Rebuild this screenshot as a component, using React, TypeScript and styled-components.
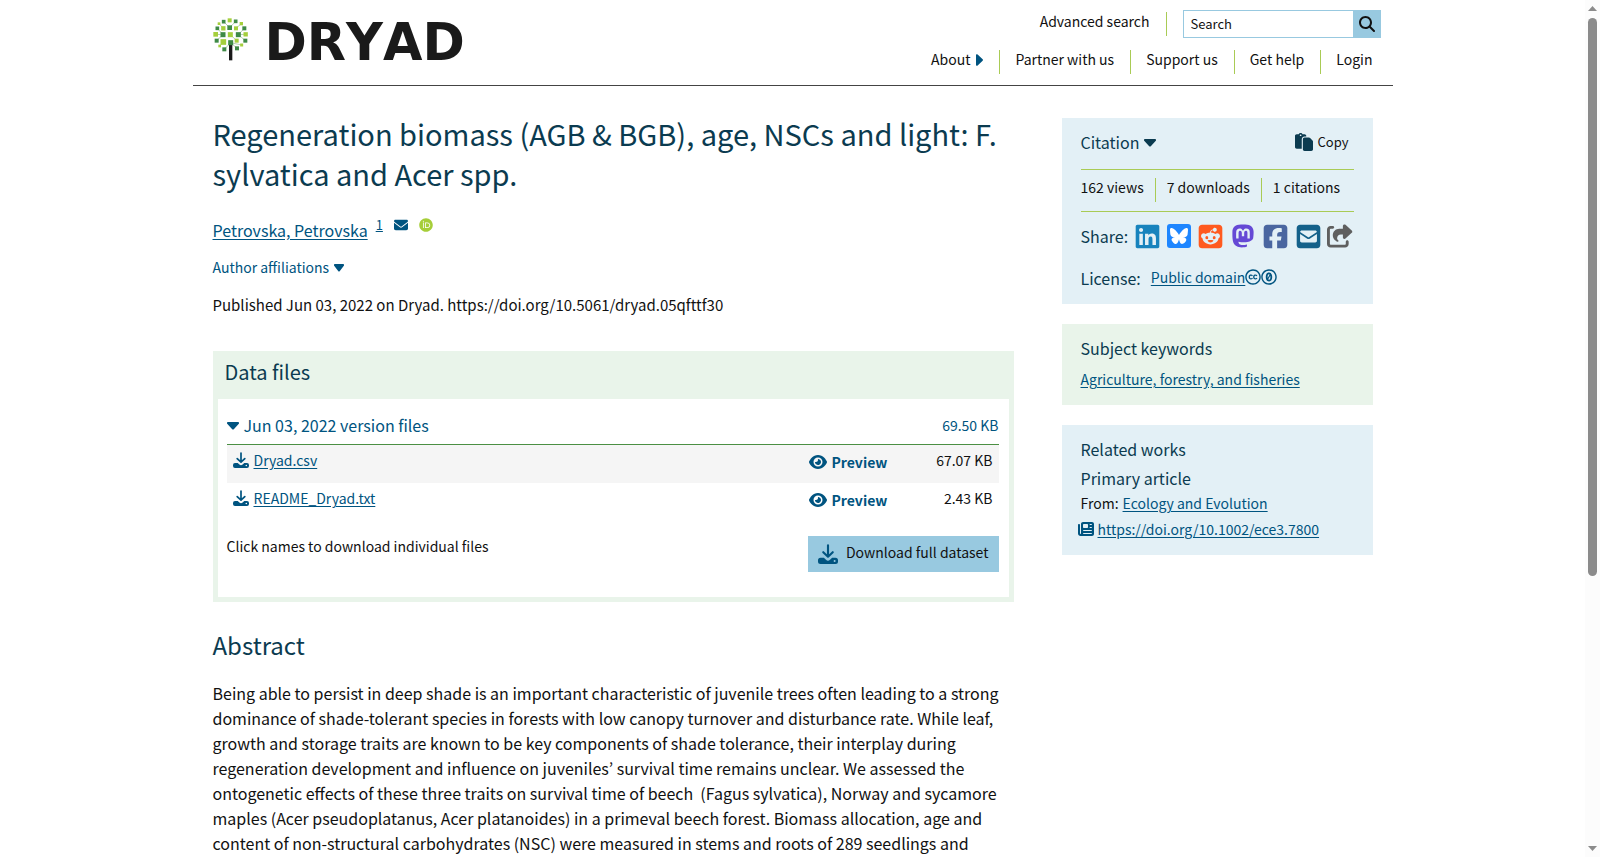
import React from 'react';
import styled, { createGlobalStyle, ThemeProvider } from 'styled-components';
import {
  FaMagnifyingGlass,
  FaEnvelope,
  FaOrcid,
  FaPaste,
  FaEye,
  FaLinkedin,
  FaBluesky,
  FaSquareReddit,
  FaMastodon,
  FaSquareFacebook,
  FaSquareEnvelope,
  FaShareFromSquare,
  FaCreativeCommons,
  FaCreativeCommonsZero,
  FaNewspaper,
} from 'react-icons/fa6';

const theme = {
  ink: '#111111',
  heading: '#0b3b50',
  link: '#005480',
  lime: '#a9cb55',
  leaf: '#4b8f43',
  mint: '#e9f4ea',
  sky: '#e3f0f6',
  button: '#98c9e0',
};

const GlobalStyle = createGlobalStyle`
  *, *::before, *::after { box-sizing: border-box; }
  body {
    margin: 0;
    background: #fff;
    color: #111;
    font-family: "Noto Sans CJK KR", "Noto Sans", sans-serif;
    font-size: 14px;
    line-height: 20px;
  }
  button, input { font: inherit; color: inherit; }
  h1, h2, h3, p, ul { margin: 0; padding: 0; font-weight: 400; }
  svg { display: block; flex: none; }
`;

/* ---------- Window ---------- */

const Window = styled.div`
  display: flex;
  height: 100vh;
`;

const Page = styled.div`
  flex: 1;
  min-width: 0;
  overflow-y: auto;
  scrollbar-width: none;
`;

const ScrollRail = styled.div`
  display: flex;
  flex-direction: column;
  align-items: center;
  gap: 7px;
  flex: 0 0 15px;
  padding: 6px 0;
  background: #fcfcfc;
`;

const ScrollTrack = styled.div`
  flex: 1;
  width: 9px;
`;

const ScrollThumb = styled.div`
  height: 68%;
  border-radius: 5px;
  background: #8b8b8b;
`;

const ScrollArrow = styled.svg`
  width: 9px;
  height: 5px;
  fill: #8b8b8b;
`;

/* ---------- Header ---------- */

const Header = styled.header`
  display: flex;
  justify-content: space-between;
  max-width: 1200px;
  margin: 0 auto;
  padding: 10px 12px 10px 20px;
  border-bottom: 1px solid #444;
`;

const Logo = styled.a`
  display: flex;
  align-items: flex-start;
  gap: 16px;
  color: #1a1a1a;
  text-decoration: none;
  svg { margin-top: 8px; }
`;

const Wordmark = styled.span`
  font: 700 51px/65px "DejaVu Sans", sans-serif;
  font-kerning: none;
`;

const HeaderNav = styled.div`
  display: flex;
  flex-direction: column;
  align-items: flex-end;
  gap: 12px;
`;

const SearchRow = styled.div`
  display: flex;
  align-items: center;
  gap: 16px;
`;

const NavRow = styled.nav`
  display: flex;
  padding: 0 8px 1px 0;
`;

const NavLink = styled.a<{ $divided?: boolean }>`
  display: flex;
  align-items: center;
  gap: 6px;
  height: 24px;
  padding: 0 0 6px;
  color: ${({ theme }) => theme.ink};
  font-size: 14px;
  text-decoration: none;
  ${({ $divided, theme }) =>
    $divided && `padding-right: 16px; margin-right: 15px; border-right: 1px solid ${theme.lime};`}
  svg { margin-top: 2px; color: ${({ theme }) => theme.link}; }
`;

const AdvancedLink = styled(NavLink)`
  margin-right: 0;
`;

const SearchForm = styled.form`
  display: flex;
  height: 28px;
`;

const SearchInput = styled.input`
  width: 170px;
  padding: 0 7px;
  border: 1px solid ${({ theme }) => theme.button};
  border-right: 0;
  border-radius: 0;
  font-size: 13px;
  outline: 0;
  &::placeholder { color: ${({ theme }) => theme.ink}; opacity: 1; }
`;

const SearchButton = styled.button`
  display: flex;
  align-items: center;
  justify-content: center;
  width: 28px;
  padding: 0;
  border: 0;
  background: ${({ theme }) => theme.button};
`;

/* ---------- Layout ---------- */

const Content = styled.div`
  display: grid;
  grid-template-columns: minmax(0, 1fr) 311px;
  align-items: start;
  gap: 48px;
  max-width: 1200px;
  margin: 0 auto;
  padding: 27px 20px 0;
`;

const Article = styled.main`
  display: flex;
  flex-direction: column;
`;

const Sidebar = styled.aside`
  display: flex;
  flex-direction: column;
  gap: 20px;
  padding-top: 5px;
`;

const TextLink = styled.a`
  color: ${({ theme }) => theme.link};
  text-decoration: underline;
  text-underline-offset: 2px;
`;

/* ---------- Article ---------- */

const Title = styled.h1`
  color: ${({ theme }) => theme.heading};
  font-size: 29px;
  line-height: 40px;
`;

const Authors = styled.div`
  display: flex;
  align-items: flex-start;
  gap: 8px;
  margin-top: 22px;
  color: ${({ theme }) => theme.link};
  font-size: 16px;
  line-height: 30px;
`;

const AuthorMark = styled.a`
  display: flex;
  align-items: center;
  height: 20px;
  margin-right: 3px;
  color: ${({ theme }) => theme.link};
  font-size: 13px;
  text-decoration: underline;
`;

const AffiliationToggle = styled.button`
  display: flex;
  align-items: center;
  align-self: flex-start;
  gap: 5px;
  margin-top: 10px;
  padding: 0;
  border: 0;
  background: none;
  color: ${({ theme }) => theme.link};
  font-size: 14px;
  line-height: 24px;
`;

const Published = styled.p`
  margin-top: 12px;
  font-size: 15px;
  line-height: 28px;
`;

const Abstract = styled.section`
  margin-top: 23px;
`;

const AbstractHeading = styled.h2`
  color: ${({ theme }) => theme.heading};
  font-size: 24px;
  line-height: 40px;
`;

const AbstractText = styled.p`
  margin-top: 16px;
  font-size: 16px;
  line-height: 25px;
`;

/* ---------- Data files ---------- */

const FilesPanel = styled.section`
  margin-top: 32px;
  padding: 0 5px 5px;
  background: ${({ theme }) => theme.mint};
`;

const FilesHeading = styled.h2`
  padding: 1px 7px 7px;
  color: ${({ theme }) => theme.heading};
  font-size: 20px;
  line-height: 40px;
`;

const FilesBody = styled.div`
  padding: 12px 10px 25px 9px;
  background: #fff;
`;

const VersionToggle = styled.button`
  display: flex;
  align-items: center;
  gap: 5px;
  width: 100%;
  height: 34px;
  padding: 0 0 5px;
  border: 0;
  border-bottom: 1px solid ${({ theme }) => theme.leaf};
  background: none;
  color: ${({ theme }) => theme.link};
  font-size: 16px;
`;

const VersionSize = styled.span`
  margin-left: auto;
  font-size: 14px;
`;

const FileTable = styled.table`
  width: 100%;
  border-collapse: collapse;
`;

const FileRow = styled.tr`
  height: 38px;
  &:nth-child(odd) { background: #f5f5f5; }
`;

const FileCell = styled.td<{ $width?: string; $align?: string }>`
  width: ${({ $width }) => $width ?? 'auto'};
  padding: 5px 6px 0;
  text-align: ${({ $align }) => $align ?? 'left'};
  vertical-align: top;
`;

const FileName = styled.span`
  display: flex;
  align-items: center;
  gap: 5px;
  color: ${({ theme }) => theme.link};
`;

const PreviewButton = styled.button`
  display: flex;
  align-items: center;
  gap: 5px;
  padding: 2px 0 0;
  border: 0;
  background: none;
  color: ${({ theme }) => theme.link};
  font-weight: 700;
`;

const FilesFooter = styled.div`
  display: flex;
  align-items: flex-start;
  justify-content: space-between;
  margin-top: 15px;
`;

const DownloadButton = styled.button`
  display: flex;
  align-items: center;
  gap: 8px;
  height: 36px;
  padding: 0 10px 4px;
  border: 0;
  background: ${({ theme }) => theme.button};
  svg { margin-top: 4px; color: ${({ theme }) => theme.link}; }
`;

/* ---------- Sidebar ---------- */

const Card = styled.section<{ $tone: 'sky' | 'mint' }>`
  padding: 12px 19px 13px;
  background: ${({ theme, $tone }) => theme[$tone]};
`;

const CardHeading = styled.h2`
  color: ${({ theme }) => theme.heading};
  font-size: 16px;
  line-height: 24px;
`;

const CardSubheading = styled.h3`
  margin-top: 5px;
  color: ${({ theme }) => theme.heading};
  font-size: 16px;
  line-height: 24px;
`;

const CardLine = styled.p`
  display: flex;
  align-items: center;
  gap: 4px;
  line-height: 26px;
  color: ${({ theme }) => theme.ink};
  svg { color: ${({ theme }) => theme.link}; margin-left: -3px; }
`;

const KeywordLine = styled(CardLine)`
  padding-top: 6px;
`;

const CitationBar = styled.div`
  display: flex;
  align-items: center;
  justify-content: space-between;
  height: 39px;
  padding: 0 5px 15px 0;
`;

const PlainButton = styled.button<{ $size: number }>`
  display: flex;
  align-items: center;
  gap: 5px;
  padding: 0;
  border: 0;
  background: none;
  color: ${({ theme, $size }) => ($size > 14 ? theme.heading : theme.ink)};
  font-size: ${({ $size }) => $size}px;
  svg { color: ${({ theme }) => theme.heading}; }
`;

const Stats = styled.ul`
  display: flex;
  height: 43px;
  padding-top: 8px;
  border: solid ${({ theme }) => theme.lime};
  border-width: 1px 0;
  list-style: none;
`;

const Stat = styled.li`
  height: 24px;
  line-height: 18px;
  & + & {
    margin-left: 11px;
    padding-left: 11px;
    border-left: 1px solid ${({ theme }) => theme.lime};
  }
`;

const ShareRow = styled.div`
  display: flex;
  align-items: center;
  justify-content: space-between;
  margin-top: 12px;
  height: 24px;
`;

const CardLabel = styled.span`
  color: ${({ theme }) => theme.heading};
  font-size: 16px;
  line-height: 24px;
`;

const ShareLink = styled.a<{ $color: string }>`
  color: ${({ $color }) => $color};
`;

const LicenseRow = styled.div`
  display: flex;
  align-items: center;
  gap: 10px;
  margin-top: 16px;
  height: 27px;
`;

const LicenseBadges = styled.span`
  display: flex;
  align-items: center;
  color: ${({ theme }) => theme.link};
  padding-bottom: 2px;
`;

/* ---------- Drawings ---------- */

const leaves: Array<[number, number, number, 'd' | 'l']> = [
  [73, 30, 12, 'l'], [55, 34, 11, 'd'], [91, 33, 11, 'd'], [41, 40, 8, 'l'], [108, 40, 10, 'l'],
  [36, 54, 11, 'd'], [54, 54, 13, 'l'], [73, 52, 14, 'd'], [92, 54, 12, 'l'], [117, 54, 12, 'd'],
  [31, 72, 14, 'l'], [53, 73, 15, 'd'], [75, 73, 15, 'l'], [99, 73, 15, 'd'], [121, 72, 13, 'l'],
  [34, 91, 12, 'd'], [54, 95, 17, 'l'], [76, 97, 15, 'd'], [94, 91, 12, 'l'], [120, 91, 12, 'd'],
  [43, 107, 8, 'l'], [109, 104, 9, 'l'], [57, 117, 12, 'd'], [95, 114, 12, 'd'],
];

const Tree = () => (
  <svg width="36" height="43" viewBox="23 23 108 129" aria-hidden="true">
    <path
      d="M76 97L57 117M76 97L95 114M76 97L109 104M54 95L43 107M53 73L34 91M99 73L120 91M75 73L94 91M73 52L55 34M73 52L91 33M53 73L31 72M99 73L121 72M54 54L41 40M92 54L108 40M53 73L36 54M99 73L117 54"
      stroke="#8fb98a"
      strokeWidth="2"
    />
    <path d="M71 100H81V150H71z" fill="#1a1a1a" />
    {leaves.map(([x, y, s, tone]) => (
      <rect
        key={`${x}-${y}`}
        x={x - s / 2}
        y={y - s / 2}
        width={s}
        height={s}
        fill={tone === 'd' ? '#3f8a46' : '#a5cf3c'}
      />
    ))}
  </svg>
);

const CaretDown = ({ width }: { width: number }) => (
  <svg width={width} height="10" viewBox="0 0 12 10" preserveAspectRatio="none" aria-hidden="true">
    <path d="M1 2h10a1 1 0 0 1 .8 1.700L6.800 9.200a1.100 1.100 0 0 1-1.600 0L.2 3.700A1 1 0 0 1 1 2z" fill="currentColor" />
  </svg>
);

const CaretRight = () => (
  <svg width="7" height="12" viewBox="0 0 6 10" aria-hidden="true">
    <path d="M0 .8A.8.8 0 0 1 1.400.3L5.700 4.400a.9.9 0 0 1 0 1.200L1.400 9.700A.8.8 0 0 1 0 9.200z" fill="currentColor" />
  </svg>
);

const DownloadIcon = ({ size }: { size: number }) => (
  <svg width={size} height={size} viewBox="0 0 16 16" aria-hidden="true">
    <path d="M8 1v9M4.200 6.600L8 10.200l3.800-3.600" fill="none" stroke="currentColor" strokeWidth="1.700" strokeLinecap="round" strokeLinejoin="round" />
    <path
      d="M2 11h2.700l1.700 1.600a2.300 2.300 0 0 0 3.200 0L11.300 11H14a2 2 0 0 1 2 2v1a2 2 0 0 1-2 2H2a2 2 0 0 1-2-2v-1a2 2 0 0 1 2-2zM13.300 12.700a.8.8 0 1 0 0 1.600.8.8 0 0 0 0-1.600z"
      fill="currentColor"
      fillRule="evenodd"
    />
  </svg>
);

const BlueskySquare = () => (
  <svg width="24" height="24" viewBox="0 0 24 24" aria-hidden="true">
    <rect width="24" height="24" rx="3" fill="#1e86ff" />
    <FaBluesky x="3" y="3" size={18} color="#fff" />
  </svg>
);

/* ---------- Data ---------- */

const files = [
  { name: 'Dryad.csv', size: '67.07 KB' },
  { name: 'README_Dryad.txt', size: '2.43 KB' },
];

const shares = [
  { label: 'LinkedIn', color: '#1783bd', icon: <FaLinkedin size={27} /> },
  { label: 'Bluesky', color: '#1e86ff', icon: <BlueskySquare /> },
  { label: 'Reddit', color: '#ff5a1f', icon: <FaSquareReddit size={27} /> },
  { label: 'Mastodon', color: '#6549d5', icon: <FaMastodon size={26} /> },
  { label: 'Facebook', color: '#4a66a0', icon: <FaSquareFacebook size={27} /> },
  { label: 'Email', color: '#14618a', icon: <FaSquareEnvelope size={27} /> },
  { label: 'Share link', color: '#5f5f5f', icon: <FaShareFromSquare size={26} /> },
];

const abstract =
  'Being able to persist in deep shade is an important characteristic of juvenile trees often leading to a strong dominance of shade-tolerant species in forests with low canopy turnover and disturbance rate. While leaf, growth and storage traits are known to be key components of shade tolerance, their interplay during regeneration development and influence on juveniles\u2019 survival time remains unclear. We assessed the ontogenetic effects of these three traits on survival time of beech \u00a0(Fagus sylvatica), Norway and sycamore maples (Acer pseudoplatanus, Acer platanoides) in a primeval beech forest. Biomass allocation, age and content of non-structural carbohydrates (NSC) were measured in stems and roots of 289 seedlings and';

/* ---------- App ---------- */

export default function App() {
  return (
    <ThemeProvider theme={theme}>
      <GlobalStyle />
      <Window>
        <Page>
          <Header>
            <Logo href="#" aria-label="Dryad">
              <Tree />
              <Wordmark>DRYAD</Wordmark>
            </Logo>
            <HeaderNav>
              <SearchRow>
                <AdvancedLink href="#" $divided>Advanced search</AdvancedLink>
                <SearchForm role="search">
                  <SearchInput type="text" placeholder="Search" aria-label="Search" />
                  <SearchButton type="button" aria-label="Submit search">
                    <FaMagnifyingGlass size={16} />
                  </SearchButton>
                </SearchForm>
              </SearchRow>
              <NavRow>
                <NavLink href="#" $divided>About <CaretRight /></NavLink>
                <NavLink href="#" $divided>Partner with us</NavLink>
                <NavLink href="#" $divided>Support us</NavLink>
                <NavLink href="#" $divided>Get help</NavLink>
                <NavLink href="#">Login</NavLink>
              </NavRow>
            </HeaderNav>
          </Header>

          <Content>
            <Article>
              <Title>Regeneration biomass (AGB &amp; BGB), age, NSCs and light: F. sylvatica and Acer spp.</Title>
              <Authors>
                <TextLink href="#">Petrovska, Petrovska</TextLink>
                <AuthorMark href="#">1</AuthorMark>
                <AuthorMark href="#" aria-label="Email author"><FaEnvelope size={14} /></AuthorMark>
                <AuthorMark href="#" aria-label="ORCID"><FaOrcid size={14} color="#a6ce39" /></AuthorMark>
              </Authors>
              <AffiliationToggle type="button">
                Author affiliations <CaretDown width={10} />
              </AffiliationToggle>
              <Published>Published Jun 03, 2022 on Dryad. https://doi.org/10.5061/dryad.05qfttf30</Published>

              <FilesPanel>
                <FilesHeading>Data files</FilesHeading>
                <FilesBody>
                  <VersionToggle type="button">
                    <CaretDown width={12} /> Jun 03, 2022 version files
                    <VersionSize>69.50 KB</VersionSize>
                  </VersionToggle>
                  <FileTable>
                    <tbody>
                      {files.map((file) => (
                        <FileRow key={file.name}>
                          <FileCell>
                            <FileName>
                              <DownloadIcon size={16} />
                              <TextLink href="#">{file.name}</TextLink>
                            </FileName>
                          </FileCell>
                          <FileCell $width="100px">
                            <PreviewButton type="button"><FaEye size={18} /> Preview</PreviewButton>
                          </FileCell>
                          <FileCell $width="96px" $align="right">{file.size}</FileCell>
                        </FileRow>
                      ))}
                    </tbody>
                  </FileTable>
                  <FilesFooter>
                    <span>Click names to download individual files</span>
                    <DownloadButton type="button">
                      <DownloadIcon size={20} /> Download full dataset
                    </DownloadButton>
                  </FilesFooter>
                </FilesBody>
              </FilesPanel>

              <Abstract>
                <AbstractHeading>Abstract</AbstractHeading>
                <AbstractText>{abstract}</AbstractText>
              </Abstract>
            </Article>

            <Sidebar>
              <Card $tone="sky">
                <CitationBar>
                  <PlainButton type="button" $size={16}>Citation <CaretDown width={12} /></PlainButton>
                  <PlainButton type="button" $size={13}><FaPaste size={18} /> Copy</PlainButton>
                </CitationBar>
                <Stats>
                  <Stat>162 views</Stat>
                  <Stat>7 downloads</Stat>
                  <Stat>1 citations</Stat>
                </Stats>
                <ShareRow>
                  <CardLabel>Share:</CardLabel>
                  {shares.map((share) => (
                    <ShareLink key={share.label} href="#" aria-label={share.label} $color={share.color}>
                      {share.icon}
                    </ShareLink>
                  ))}
                </ShareRow>
                <LicenseRow>
                  <CardLabel>License:</CardLabel>
                  <LicenseBadges>
                    <TextLink href="#">Public domain</TextLink>
                    <FaCreativeCommons size={16} />
                    <FaCreativeCommonsZero size={16} />
                  </LicenseBadges>
                </LicenseRow>
              </Card>

              <Card $tone="mint">
                <CardHeading>Subject keywords</CardHeading>
                <KeywordLine>
                  <TextLink href="#">Agriculture, forestry, and fisheries</TextLink>
                </KeywordLine>
              </Card>

              <Card $tone="sky">
                <CardHeading>Related works</CardHeading>
                <CardSubheading>Primary article</CardSubheading>
                <CardLine>From: <TextLink href="#">Ecology and Evolution</TextLink></CardLine>
                <CardLine>
                  <FaNewspaper size={16} />
                  <TextLink href="#">https://doi.org/10.1002/ece3.7800</TextLink>
                </CardLine>
              </Card>
            </Sidebar>
          </Content>
        </Page>

        <ScrollRail aria-hidden="true">
          <ScrollArrow viewBox="0 0 9 5"><path d="M4.500 0L9 5H0z" /></ScrollArrow>
          <ScrollTrack><ScrollThumb /></ScrollTrack>
          <ScrollArrow viewBox="0 0 9 5"><path d="M0 0h9L4.500 5z" /></ScrollArrow>
        </ScrollRail>
      </Window>
    </ThemeProvider>
  );
}
